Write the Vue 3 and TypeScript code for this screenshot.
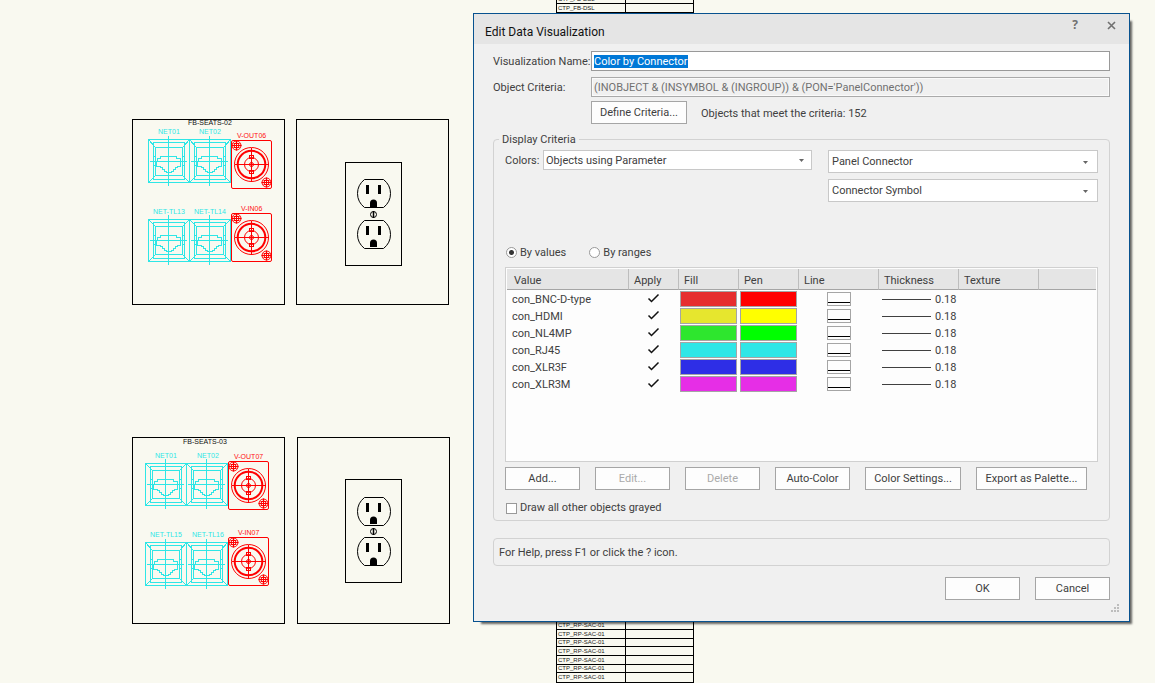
<script setup lang="ts">
import { onMounted, ref } from 'vue'

interface Label { x: number; y: number; text: string; tone: string }
interface Spot { x: number; y: number; drop?: number }
interface Outlet { y: number; ground: number }
interface Row { value: string; apply: boolean; fill: string; pen: string; thickness: string }

const frames = [
  { x: 132, y: 119, w: 152, h: 185 },
  { x: 296, y: 119, w: 152, h: 185 },
  { x: 345, y: 162, w: 56, h: 103 },
  { x: 132, y: 437, w: 152, h: 186 },
  { x: 297, y: 437, w: 152, h: 186 },
  { x: 345, y: 479, w: 56, h: 103 },
]

const labels: Label[] = [
  { x: 188, y: 125, text: 'FB-SEATS-02', tone: 'ink' },
  { x: 158, y: 134, text: 'NET01', tone: 'cyan' },
  { x: 199, y: 134, text: 'NET02', tone: 'cyan' },
  { x: 237, y: 138, text: 'V-OUT06', tone: 'red' },
  { x: 153, y: 214, text: 'NET-TL13', tone: 'cyan' },
  { x: 194, y: 214, text: 'NET-TL14', tone: 'cyan' },
  { x: 241, y: 211, text: 'V-IN06', tone: 'red' },
  { x: 183, y: 444, text: 'FB-SEATS-03', tone: 'ink' },
  { x: 155, y: 458, text: 'NET01', tone: 'cyan' },
  { x: 197, y: 458, text: 'NET02', tone: 'cyan' },
  { x: 234, y: 459, text: 'V-OUT07', tone: 'red' },
  { x: 150, y: 537, text: 'NET-TL15', tone: 'cyan' },
  { x: 192, y: 537, text: 'NET-TL16', tone: 'cyan' },
  { x: 238, y: 535, text: 'V-IN07', tone: 'red' },
]

const jacks: Spot[] = [
  { x: 148, y: 139, drop: 1 }, { x: 189, y: 139, drop: 1 },
  { x: 148, y: 219, drop: 0 }, { x: 189, y: 219, drop: 0 },
  { x: 145, y: 463, drop: 0 }, { x: 186, y: 463, drop: 0 },
  { x: 145, y: 542, drop: 1 }, { x: 186, y: 542, drop: 1 },
]

const bncs: Spot[] = [
  { x: 231, y: 140 }, { x: 231, y: 213 }, { x: 228, y: 461 }, { x: 228, y: 537 },
]

const outlets: Outlet[] = [
  { y: 179, ground: 21 }, { y: 220, ground: 20 }, { y: 497, ground: 20 }, { y: 537, ground: 21 },
]
const screws = [214, 531]

const sheetLines = [3, 12, 629, 638, 646, 655, 664, 672, 682]
const sheetRows = [
  { y: 1, text: 'CTP_FB-DSL' },
  { y: 10, text: 'CTP_FB-DSL' },
  ...[627, 636, 644, 653, 662, 670, 679].map((y) => ({ y, text: 'CTP_RP-SAC-01' })),
]

const name = ref('Color by Connector')
const criteria = ref("(INOBJECT & (INSYMBOL & (INGROUP)) & (PON='PanelConnector'))")
const mode = ref('values')
const grayed = ref(false)
const columns = ['Value', 'Apply', 'Fill', 'Pen', 'Line', 'Thickness', 'Texture', '']
const rows = ref<Row[]>([
  { value: 'con_BNC-D-type', apply: true, fill: '#e62e2e', pen: '#ff0000', thickness: '0.18' },
  { value: 'con_HDMI', apply: true, fill: '#e6e62e', pen: '#ffff00', thickness: '0.18' },
  { value: 'con_NL4MP', apply: true, fill: '#2ee62e', pen: '#00ff00', thickness: '0.18' },
  { value: 'con_RJ45', apply: true, fill: '#2ee6e6', pen: '#2ee6e6', thickness: '0.18' },
  { value: 'con_XLR3F', apply: true, fill: '#2e2ee6', pen: '#2e2ee6', thickness: '0.18' },
  { value: 'con_XLR3M', apply: true, fill: '#e62ee6', pen: '#e62ee6', thickness: '0.18' },
])
const actions = [
  { text: 'Add...', size: 'normal', off: false },
  { text: 'Edit...', size: 'normal', off: true },
  { text: 'Delete', size: 'normal', off: true },
  { text: 'Auto-Color', size: 'normal', off: false },
  { text: 'Color Settings...', size: 'wide', off: false },
  { text: 'Export as Palette...', size: 'wider', off: false },
]

const nameBox = ref<HTMLInputElement | null>(null)
onMounted(() => {
  nameBox.value?.focus()
  nameBox.value?.select()
})
</script>

<template>
  <main class="workspace">
    <svg class="drawing" aria-label="Drawing canvas">
      <defs>
        <g id="bnc" fill="none" stroke="#ff0000">
          <rect x=".5" y=".5" width="40" height="48" rx="1.5" />
          <circle cx="20.5" cy="24.5" r="17" />
          <circle cx="20.5" cy="24.5" r="13.8" stroke-width="2" />
          <circle cx="20.5" cy="24.5" r="7" />
          <circle cx="20.5" cy="24.5" r="2" />
          <path d="M3.5 24.5h34M20.5 7.5v34M18.5 15.5h4v3h-4zM18.5 30.5h4v3h-4z" shape-rendering="crispEdges" />
          <g id="bnc-screw">
            <circle cx="5.5" cy="5.5" r="4.5" />
            <circle cx="5.5" cy="5.5" r="2.5" />
            <path d="M.5 5.5h10M5.5 .5v10M2.5 3.5h6M2.5 7.5h6" />
          </g>
          <use href="#bnc-screw" x="30" y="37" />
        </g>
        <g id="outlet">
          <path d="M7.5 .5H26.5Q33.5 6 33.5 14.5T26.5 28.5H7.5Q.5 23 .5 14.5T7.5 .5Z" fill="none" stroke="#000" />
          <path d="M9 6h3v9H9zM21 6h3v9h-3z" />
        </g>
      </defs>

      <g class="hair crisp">
        <rect v-for="(f, i) in frames" :key="i" :x="f.x + 0.5" :y="f.y + 0.5" :width="f.w" :height="f.h" />
        <path d="M556.5 0V683M625.5 0V683M693.5 0V683" />
        <path v-for="y in sheetLines" :key="y" :d="`M556 ${y + 0.5}H694`" />
      </g>

      <g class="sheet-text">
        <text v-for="r in sheetRows" :key="r.y" x="558" :y="r.y">{{ r.text }}</text>
      </g>

      <g class="tags">
        <text v-for="l in labels" :key="l.text + l.y" :x="l.x" :y="l.y" :class="l.tone">{{ l.text }}</text>
      </g>

      <g v-for="(j, i) in jacks" :key="'j' + i" class="jack crisp" :transform="`translate(${j.x} ${j.y})`">
        <path :d="`M.5 .5h41v${42 + j.drop!}h-41zM5.5 3.5h31v${36 + j.drop!}h-31zM7.5 ${7.5 + j.drop!}h27v28h-27z`" />
        <path :d="`M.5 .5L7.5 ${7.5 + j.drop!}M41.5 .5L34.5 ${7.5 + j.drop!}M.5 ${42.5 + j.drop!}l7 -7M41.5 ${42.5 + j.drop!}l-7 -7`" />
        <g :transform="`translate(0 ${j.drop})`">
          <path d="M9.5 18.5h3v-2h16v2h4v8h-3v1h-2v2h-2v2h-2v1h-5v-1h-2v-2h-2v-2h-2v-1h-4zM7.5 16.5h-2v9h2M34.5 16.5h2v9h-2" />
          <path d="M2 21.5H39M20.5 -4V46" />
        </g>
      </g>

      <use v-for="(b, i) in bncs" :key="'b' + i" href="#bnc" :x="b.x" :y="b.y" />

      <g v-for="o in outlets" :key="'o' + o.y">
        <use href="#outlet" x="357" :y="o.y" />
        <path :d="`M370 ${o.y + o.ground + 7}v-4q0 -3.5 3.5 -3.5t3.5 3.5v4z`" />
      </g>
      <g v-for="s in screws" :key="'s' + s" fill="none" stroke="#000">
        <circle cx="373.5" :cy="s + 0.5" r="3" />
        <path :d="`M373.5 ${s - 3}v7`" stroke-width="1.5" />
      </g>
    </svg>

    <section class="dialog" role="dialog" aria-labelledby="dialog-title">
      <header class="titlebar">
        <h1 id="dialog-title">Edit Data Visualization</h1>
        <div class="window-buttons">
          <button type="button" aria-label="Help">?</button>
          <button type="button" aria-label="Close">
            <svg width="9" height="9" viewBox="0 0 9 9"><path d="M1 1l7 7M8 1l-7 7" stroke="#707070" stroke-width="1.6" fill="none" /></svg>
          </button>
        </div>
      </header>

      <form class="body" @submit.prevent>
        <div class="field">
          <label for="vis-name">Visualization Name:</label>
          <input id="vis-name" ref="nameBox" v-model="name" type="text" />
        </div>
        <div class="field second">
          <label for="criteria">Object Criteria:</label>
          <input id="criteria" v-model="criteria" type="text" disabled />
        </div>
        <div class="field define">
          <span></span>
          <div class="define-line">
            <button type="button" class="btn wide">Define Criteria...</button>
            <span>Objects that meet the criteria: 152</span>
          </div>
        </div>

        <fieldset>
          <legend>Display Criteria</legend>
          <div class="selectors">
            <div class="colors">
              <label for="colors">Colors:</label>
              <div class="combo short">
                <select id="colors"><option>Objects using Parameter</option></select>
                <svg width="5" height="3" viewBox="0 0 5 3"><path d="M0 0h5L2.5 3z" /></svg>
              </div>
            </div>
            <div class="params">
              <div class="combo">
                <select aria-label="Parameter record"><option>Panel Connector</option></select>
                <svg width="5" height="3" viewBox="0 0 5 3"><path d="M0 0h5L2.5 3z" /></svg>
              </div>
              <div class="combo">
                <select aria-label="Parameter field"><option>Connector Symbol</option></select>
                <svg width="5" height="3" viewBox="0 0 5 3"><path d="M0 0h5L2.5 3z" /></svg>
              </div>
            </div>
          </div>

          <div class="modes">
            <label><input v-model="mode" type="radio" name="mode" value="values" /><span>By values</span></label>
            <label><input v-model="mode" type="radio" name="mode" value="ranges" /><span>By ranges</span></label>
          </div>

          <div class="list">
            <table>
              <colgroup>
                <col class="c-value" /><col class="c-apply" /><col class="c-color" /><col class="c-color" />
                <col class="c-std" /><col class="c-std" /><col class="c-std" /><col />
              </colgroup>
              <thead>
                <tr><th v-for="c in columns" :key="c" scope="col">{{ c }}</th></tr>
              </thead>
              <tbody>
                <tr v-for="r in rows" :key="r.value">
                  <td class="value">{{ r.value }}</td>
                  <td>
                    <label class="tick">
                      <input v-model="r.apply" type="checkbox" :aria-label="'Apply ' + r.value" />
                      <svg v-if="r.apply" width="13" height="10" viewBox="0 0 13 10"><path d="M1.5 5.5L4.5 8.5L11.5 1.5" fill="none" stroke="#111" stroke-width="1.5" /></svg>
                    </label>
                  </td>
                  <td><span class="swatch" :style="{ background: r.fill }"></span></td>
                  <td><span class="swatch" :style="{ background: r.pen }"></span></td>
                  <td><span class="line-style"></span></td>
                  <td><span class="thickness"><i></i>{{ r.thickness }}</span></td>
                  <td></td>
                  <td></td>
                </tr>
              </tbody>
            </table>
          </div>

          <div class="actions">
            <button v-for="a in actions" :key="a.text" type="button" class="btn" :class="a.size" :disabled="a.off">{{ a.text }}</button>
          </div>
          <label class="check"><input v-model="grayed" type="checkbox" />Draw all other objects grayed</label>
        </fieldset>

        <p class="help">For Help, press F1 or click the ? icon.</p>

        <footer>
          <button type="submit" class="btn normal">OK</button>
          <button type="button" class="btn normal">Cancel</button>
        </footer>
      </form>
      <svg class="grip" width="8" height="8" viewBox="0 0 8 8"><path d="M6 0h2v2H6zM3 3h2v2H3zM6 3h2v2H6zM0 6h2v2H0zM3 6h2v2H3zM6 6h2v2H6z" fill="#bdbdbd" /></svg>
    </section>
  </main>
</template>

<style>
body {
  background: #f9f9f0;
}
</style>

<style scoped>
.workspace {
  position: relative;
  min-height: 100vh;
  overflow: hidden;
  background: #f9f9f0;
  color: #404040;
  font: 11px/16px Roboto, "Liberation Sans", sans-serif;
}
.drawing {
  position: absolute;
  inset: 0;
  width: 100%;
  height: 100%;
}
.hair {
  fill: none;
  stroke: #000;
}
.crisp {
  shape-rendering: crispEdges;
}
.jack {
  fill: none;
  stroke: #2ee6e6;
}
.sheet-text {
  font: 6px "Liberation Sans", sans-serif;
  fill: #222;
}
.tags {
  font: 7px "Liberation Sans", sans-serif;
}
.ink { fill: #111; }
.cyan { fill: #2ee6e6; }
.red { fill: #ff1010; }

.dialog {
  position: absolute;
  top: 13px;
  left: 473px;
  right: 25px;
  box-sizing: border-box;
  border: 1px solid #08528f;
  background: #f0f0f0;
  box-shadow: 5px 5px 2px -3px rgba(0, 0, 0, 0.6);
}
.titlebar {
  display: flex;
  justify-content: space-between;
  height: 30px;
  background: #e5e5e5;
}
h1 {
  margin: 0;
  padding: 2px 0 0 11px;
  color: #111;
  font: 12px/32px Roboto, "Noto Sans", sans-serif;
}
.window-buttons {
  display: flex;
  padding-right: 6px;
}
.window-buttons button {
  display: flex;
  align-items: center;
  justify-content: center;
  width: 24px;
  height: 22px;
  margin-left: 12px;
  padding: 0;
  border: 0;
  background: none;
  color: #707070;
  font: bold 12px/22px "Open Sans", sans-serif;
}
.body {
  padding: 7px 19px 21px;
}
.field {
  display: grid;
  grid-template-columns: 98px 1fr;
  align-items: center;
}
.field label,
.define-line span,
.modes span {
  padding-top: 2px;
}
.second { margin-top: 6px; }
.define { margin-top: 4px; }
.define-line {
  display: flex;
  align-items: center;
  gap: 14px;
}
input[type="text"] {
  box-sizing: border-box;
  width: 100%;
  height: 20px;
  padding: 0 2px;
  border: 1px solid #999;
  outline: 0;
  background: #fff;
  color: #404040;
  font: inherit;
}
input[type="text"]::selection {
  background: #0078d7;
  color: #fff;
}
input[type="text"]:disabled {
  border-color: #aaa;
  background: #f0f0f0;
  box-shadow: inset 0 0 0 1px #fafafa;
  color: #707070;
}
.btn {
  box-sizing: border-box;
  height: 23px;
  padding: 1px 0 0;
  border: 1px solid #a5a5a5;
  background: #fdfdfd;
  color: #404040;
  font: inherit;
}
.btn:disabled { color: #aaa; }
.normal { width: 75px; }
.wide { width: 96px; }
.wider { width: 111px; }

fieldset {
  min-width: 0;
  margin: 7px 0 0;
  padding: 2px 11px 4px;
  border: 1px solid #d2d2d2;
  border-radius: 4px;
}
legend {
  margin-left: -6px;
  padding: 1px 3px 0;
}
.selectors {
  display: flex;
  gap: 16px;
}
.colors {
  display: flex;
  flex: 1;
  align-items: flex-start;
}
.colors label {
  width: 38px;
  padding-top: 1px;
  line-height: 20px;
}
.params {
  display: flex;
  flex-direction: column;
  gap: 6px;
  width: 270px;
}
.combo {
  position: relative;
  flex: 1;
}
select {
  display: block;
  box-sizing: border-box;
  width: 100%;
  height: 23px;
  padding: 0 3px;
  border: 1px solid #c8c8c8;
  border-radius: 0;
  appearance: none;
  background: #fff;
  color: #404040;
  font: inherit;
}
.short select {
  height: 20px;
  padding: 2px 2px 0;
}
.combo svg {
  position: absolute;
  top: calc(50% - 1px);
  right: 10px;
  fill: #666;
  pointer-events: none;
}
.combo.short svg { right: 8px; }
.modes {
  display: flex;
  gap: 22px;
  height: 16px;
  align-items: center;
  margin-top: 42px;
}
.modes label,
.check {
  display: flex;
  align-items: center;
  gap: 3px;
}
.modes input,
.check input {
  box-sizing: border-box;
  width: 11px;
  height: 11px;
  margin: 0 0 0 1px;
  border: 1px solid #999;
  appearance: none;
  background: #fff;
}
.modes input { border-radius: 50%; }
.modes input:checked {
  background: radial-gradient(circle, #333 0 2px, #fff 3px);
}
.list {
  box-sizing: border-box;
  min-height: 195px;
  margin-top: 7px;
  padding: 1px;
  border: 1px solid #d0d0d0;
  background: #fdfdfd;
}
table {
  width: 100%;
  border-collapse: separate;
  border-spacing: 0;
  table-layout: fixed;
}
.c-value { width: 122px; }
.c-apply { width: 50px; }
.c-color { width: 60px; }
.c-std { width: 80px; }
th {
  box-sizing: border-box;
  height: 21px;
  padding: 3px 5px 0;
  border-right: 1px solid #bdbdbd;
  border-bottom: 1px solid #a5a5a5;
  background: #e5e5e5;
  font-weight: 400;
  text-align: left;
}
th:first-child { padding-left: 7px; }
th:last-child { border-right: 0; }
td {
  height: 17px;
  padding: 0;
  line-height: 17px;
}
td.value {
  height: 15px;
  padding: 2px 0 0 5px;
  line-height: 15px;
}
.tick {
  display: flex;
  justify-content: center;
  padding: 0 2px 2px 0;
}
.tick input {
  width: 0;
  height: 0;
  margin: 0;
  appearance: none;
}
.swatch {
  display: block;
  box-sizing: border-box;
  width: 57px;
  height: 16px;
  margin: 1px 0 0 1px;
  border: 1px solid #a5a5a5;
}
.line-style {
  display: flex;
  box-sizing: border-box;
  width: 24px;
  height: 14px;
  margin: 1px 0 0 28px;
  padding-bottom: 2px;
  border: 1px solid #a5a5a5;
}
.line-style::after {
  flex: 1;
  border-bottom: 1px solid #000;
  content: "";
}
.thickness {
  display: flex;
  align-items: center;
  gap: 4px;
  padding: 2px 0 0 3px;
  line-height: 15px;
}
.thickness i {
  width: 49px;
  height: 1px;
  background: #404040;
}
.actions {
  display: flex;
  gap: 15px;
  margin-top: 5px;
}
.check { margin-top: 10px; }
.help {
  box-sizing: border-box;
  margin: 17px 0 11px;
  padding: 6px 5px 4px;
  border: 1px solid #d2d2d2;
  border-radius: 4px;
}
footer {
  display: flex;
  justify-content: flex-end;
  gap: 15px;
}
.grip {
  position: absolute;
  right: 10px;
  bottom: 9px;
}
</style>
